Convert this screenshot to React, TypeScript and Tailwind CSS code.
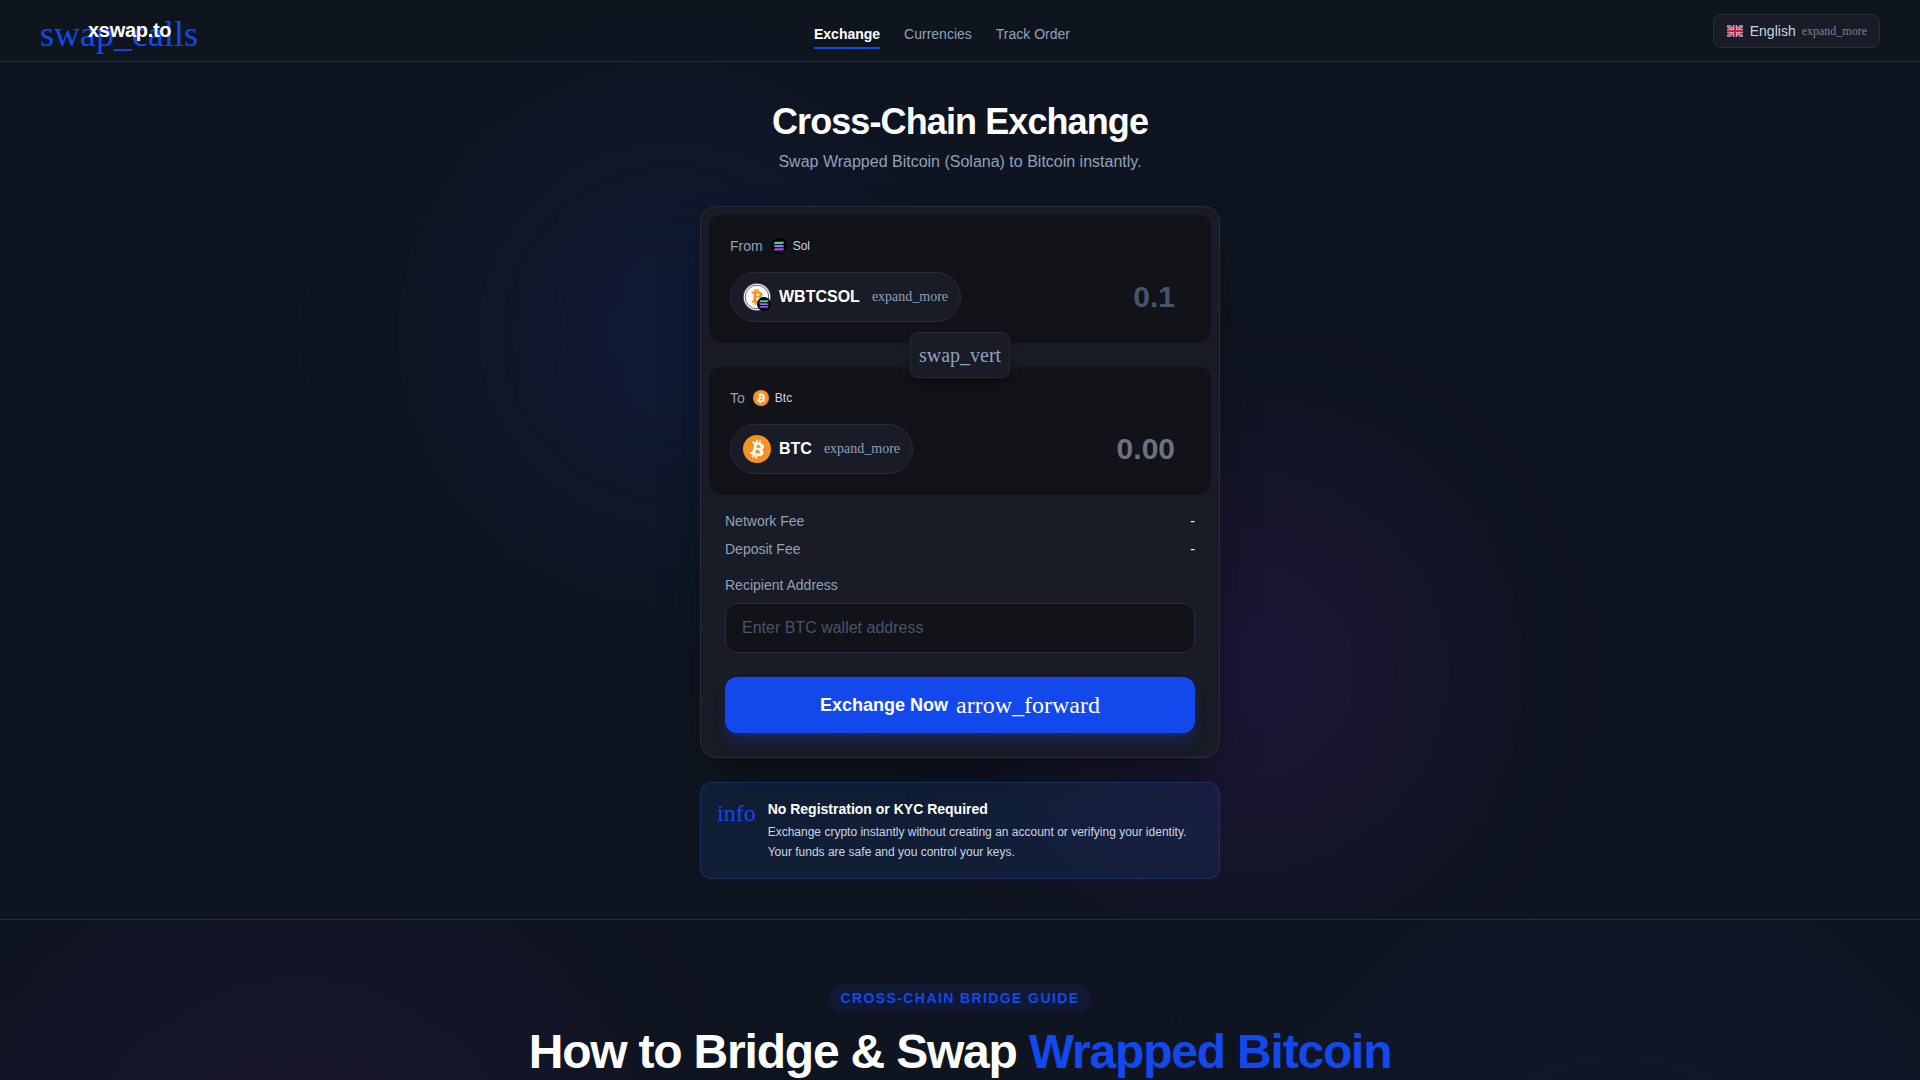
import type { ReactNode } from "react";

const NAV = [
  { label: "Exchange", active: true },
  { label: "Currencies", active: false },
  { label: "Track Order", active: false },
];

const FEES = [
  { label: "Network Fee", value: "-" },
  { label: "Deposit Fee", value: "-" },
];

const BTC_PATH =
  "M23.189 14.02c.314-2.096-1.283-3.223-3.465-3.975l.708-2.84-1.728-.43-.69 2.765c-.454-.114-.92-.22-1.385-.326l.695-2.783L15.596 6l-.708 2.839c-.376-.086-.746-.17-1.104-.26l.002-.009-2.384-.595-.46 1.846s1.283.294 1.256.312c.7.175.826.638.805 1.006l-.806 3.235c.048.012.11.03.18.057l-.183-.045-1.13 4.532c-.086.212-.303.531-.793.41.018.025-1.256-.313-1.256-.313l-.858 1.978 2.25.561c.418.105.828.215 1.231.318l-.715 2.872 1.727.43.708-2.84c.472.127.93.245 1.378.357l-.706 2.828 1.728.43.715-2.866c2.948.558 5.164.333 6.097-2.333.752-2.146-.037-3.385-1.588-4.192 1.13-.26 1.98-1.003 2.207-2.538zm-3.95 5.538c-.533 2.147-4.148.986-5.32.695l.95-3.805c1.172.293 4.929.872 4.37 3.11zm.535-5.569c-.487 1.953-3.495.96-4.47.717l.86-3.45c.975.243 4.118.696 3.61 2.733z";

function BtcIcon({ className }: { className: string }) {
  return (
    <svg viewBox="0 0 32 32" className={className} aria-hidden="true">
      <circle cx="16" cy="16" r="16" fill="#f59322" />
      <g transform="translate(16 16) scale(1.08) translate(-16 -16)">
        <path d={BTC_PATH} fill="#fff" />
      </g>
    </svg>
  );
}

function SolBars() {
  return (
    <>
      <circle cx="16" cy="16" r="16" fill="#000" />
      <path d="M8.2 7.5H27l-3.6 4.3H4.8z" fill="#3fcfb6" />
      <path d="M4.8 14h18.6l3.6 4.3H8.2z" fill="#7488e2" />
      <path d="M8.2 20.5H27l-3.6 4.3H4.8z" fill="#b04af0" />
    </>
  );
}

function SolIcon({ className }: { className: string }) {
  return (
    <svg viewBox="0 0 32 32" className={className} aria-hidden="true">
      <SolBars />
    </svg>
  );
}

function WbtcSolIcon({ className }: { className: string }) {
  return (
    <svg viewBox="0 0 28 28" className={className} aria-hidden="true">
      <circle cx="14" cy="14" r="14" fill="#5a5564" />
      <circle cx="14" cy="14" r="13.2" fill="#fff" />
      <circle cx="14" cy="14" r="11.8" fill="none" stroke="#5a5564" strokeWidth="0.9" />
      <g transform="translate(14 14) rotate(-14) scale(0.8) translate(-16 -16)">
        <path d={BTC_PATH} fill="#f7931a" stroke="#f7931a" strokeWidth="0.5" />
      </g>
      <g transform="translate(14 14) scale(0.4375)">
        <SolBars />
      </g>
    </svg>
  );
}

function FlagIcon() {
  return (
    <svg viewBox="0 0 18 12" className="h-3 w-[18px]" aria-hidden="true">
      <clipPath id="flag">
        <rect x="1" width="16" height="12" rx="1" />
      </clipPath>
      <g clipPath="url(#flag)">
        <rect width="18" height="12" fill="#12408f" />
        <path d="M1 0l16 12M17 0L1 12" stroke="#eee" strokeWidth="2.6" />
        <path d="M1 0l16 12M17 0L1 12" stroke="#d0203a" strokeWidth="1.2" />
        <path d="M9 0v12M0 6h18" stroke="#eee" strokeWidth="3.6" />
        <path d="M9 0v12M0 6h18" stroke="#d0203a" strokeWidth="2.4" />
      </g>
    </svg>
  );
}

function Glyph({ name, className }: { name: string; className: string }) {
  return (
    <span className={`font-['Liberation_Serif',serif] font-normal ${className}`}>{name}</span>
  );
}

type PanelProps = {
  label: string;
  network: string;
  networkIcon: ReactNode;
  symbol: string;
  symbolIcon: ReactNode;
  amount: ReactNode;
};

function AssetPanel({ label, network, networkIcon, symbol, symbolIcon, amount }: PanelProps) {
  return (
    <div className="rounded-xl border border-transparent bg-[#111318] p-5">
      <div className="mb-4 flex items-center">
        <span className="mr-2 text-sm text-slate-400">{label}</span>
        {networkIcon}
        <span className="ml-1.5 text-xs text-slate-300">{network}</span>
      </div>
      <div className="flex items-center justify-between gap-4">
        <button
          type="button"
          className="flex shrink-0 items-center gap-2 rounded-full border border-[#292c37] bg-[#191b26] px-3 py-2.5"
        >
          {symbolIcon}
          <span className="text-base font-bold text-white">{symbol}</span>
          <Glyph name="expand_more" className="ml-1 text-sm text-slate-400" />
        </button>
        {amount}
      </div>
    </div>
  );
}

function Header() {
  return (
    <header className="relative z-10 border-b border-[#292c37] bg-[#0f1520]/60">
      <div className="flex min-h-[61px] items-center justify-between px-10 py-3">
        <a href="#" className="flex items-center gap-3 self-start">
          <span className="h-9 w-9">
            <Glyph name="swap_calls" className="block text-4xl leading-[45px] text-[#1349ec]" />
          </span>
          <span className="relative text-xl leading-7 font-bold tracking-[-0.015em] text-white">
            xswap.to
          </span>
        </a>
        <nav className="flex gap-6 self-end">
          {NAV.map((item) => (
            <a
              key={item.label}
              href="#"
              className={
                item.active
                  ? "border-b-2 border-[#1349ec] pb-[3px] text-sm font-bold text-white"
                  : "border-b-2 border-transparent pb-[3px] text-sm text-slate-400"
              }
            >
              {item.label}
            </a>
          ))}
        </nav>
        <button
          type="button"
          className="flex items-center gap-1.5 rounded-lg border border-[#292c37] bg-[#191b26] px-3 py-1.5"
        >
          <FlagIcon />
          <span className="text-sm text-slate-300">English</span>
          <Glyph name="expand_more" className="text-xs text-slate-400/80" />
        </button>
      </div>
    </header>
  );
}

function ExchangeCard() {
  return (
    <form
      className="rounded-2xl border border-[#292c37] bg-[#191b26] p-2 shadow-2xl shadow-black/40"
      onSubmit={(e) => e.preventDefault()}
    >
      <AssetPanel
        label="From"
        network="Sol"
        networkIcon={<SolIcon className="h-4 w-4" />}
        symbol="WBTCSOL"
        symbolIcon={<WbtcSolIcon className="h-7 w-7" />}
        amount={
          <input
            type="text"
            inputMode="decimal"
            aria-label="Amount to send"
            placeholder="0.1"
            className="w-full min-w-0 bg-transparent pr-[15px] text-right text-3xl font-bold text-white outline-none placeholder:text-slate-600"
          />
        }
      />
      <div className="relative flex h-6 items-center">
        <div className="h-px w-full bg-[#20222d]" />
        <button
          type="button"
          aria-label="Swap direction"
          className="absolute top-1/2 left-1/2 flex -translate-x-1/2 -translate-y-1/2 rounded-lg border border-[#292c37] bg-[#191b26] p-2 shadow-lg shadow-black/20"
        >
          <Glyph name="swap_vert" className="text-xl text-slate-400" />
        </button>
      </div>
      <AssetPanel
        label="To"
        network="Btc"
        networkIcon={<BtcIcon className="h-4 w-4" />}
        symbol="BTC"
        symbolIcon={<BtcIcon className="h-7 w-7" />}
        amount={<output className="pr-[15px] text-3xl font-bold text-gray-500">0.00</output>}
      />

      <div className="flex flex-col p-4">
        <dl className="flex flex-col gap-2 text-sm">
          {FEES.map((fee) => (
            <div key={fee.label} className="flex justify-between">
              <dt className="text-slate-400">{fee.label}</dt>
              <dd className="font-medium text-white">{fee.value}</dd>
            </div>
          ))}
        </dl>
        <label htmlFor="recipient" className="mt-4 mb-2 text-sm text-slate-400">
          Recipient Address
        </label>
        <input
          id="recipient"
          type="text"
          placeholder="Enter BTC wallet address"
          className="rounded-xl border border-[#292c37] bg-[#111318] px-4 py-3 text-base text-white outline-none placeholder:text-slate-600"
        />
        <button
          type="submit"
          className="mt-6 flex h-14 items-center justify-center gap-2 rounded-xl bg-[#1349ec] text-lg font-bold text-white shadow-lg shadow-[#1349ec]/25"
        >
          Exchange Now
          <Glyph name="arrow_forward" className="text-2xl" />
        </button>
      </div>
    </form>
  );
}

function InfoBanner() {
  return (
    <div className="flex items-start gap-3 rounded-xl border border-blue-500/20 bg-blue-500/10 p-4">
      <Glyph name="info" className="mt-0.5 text-2xl leading-6 text-[#1349ec]" />
      <div>
        <h3 className="mb-1 text-sm font-bold text-white">No Registration or KYC Required</h3>
        <p className="text-xs leading-relaxed text-slate-300">
          Exchange crypto instantly without creating an account or verifying your identity. Your
          funds are safe and you control your keys.
        </p>
      </div>
    </div>
  );
}

export default function App() {
  return (
    <div className="relative flex min-h-screen flex-col overflow-hidden bg-[#0f1520] font-['Liberation_Sans',Arial,sans-serif]">
      <div className="pointer-events-none absolute top-[142px] left-1/4 size-96 rounded-full bg-[#1340ec]/10 blur-[100px]" />
      <div className="pointer-events-none absolute top-[480px] right-1/4 size-96 rounded-full bg-purple-600/10 blur-[100px]" />

      <Header />

      <main className="relative mx-auto w-full max-w-[520px] pt-10 pb-10">
        <div className="mb-8 text-center">
          <h1 className="mb-2 text-4xl font-bold tracking-tight text-white">
            Cross-Chain Exchange
          </h1>
          <p className="text-base text-slate-400">
            Swap Wrapped Bitcoin (Solana) to Bitcoin instantly.
          </p>
        </div>
        <div className="flex flex-col gap-6">
          <ExchangeCard />
          <InfoBanner />
        </div>
      </main>

      <section className="relative flex-1 overflow-hidden border-t border-[#292c37] bg-[#0f1520] pt-16 text-center">
        <div className="pointer-events-none absolute top-0 left-0 size-[600px] rounded-full bg-purple-600/6 blur-[120px]" />
        <div className="pointer-events-none absolute top-0 right-0 size-[600px] rounded-full bg-[#1d3bec]/6 blur-[120px]" />
        <div className="relative flex flex-col items-center gap-4">
          <span className="rounded-full bg-[#1349ec]/10 px-3 py-1 text-sm font-bold tracking-widest text-[#1349ec] uppercase">
            Cross-Chain Bridge Guide
          </span>
          <h2 className="text-5xl font-bold tracking-tight text-white">
            How to Bridge &amp; Swap <span className="text-[#1349ec]">Wrapped Bitcoin</span>
          </h2>
        </div>
      </section>
    </div>
  );
}
